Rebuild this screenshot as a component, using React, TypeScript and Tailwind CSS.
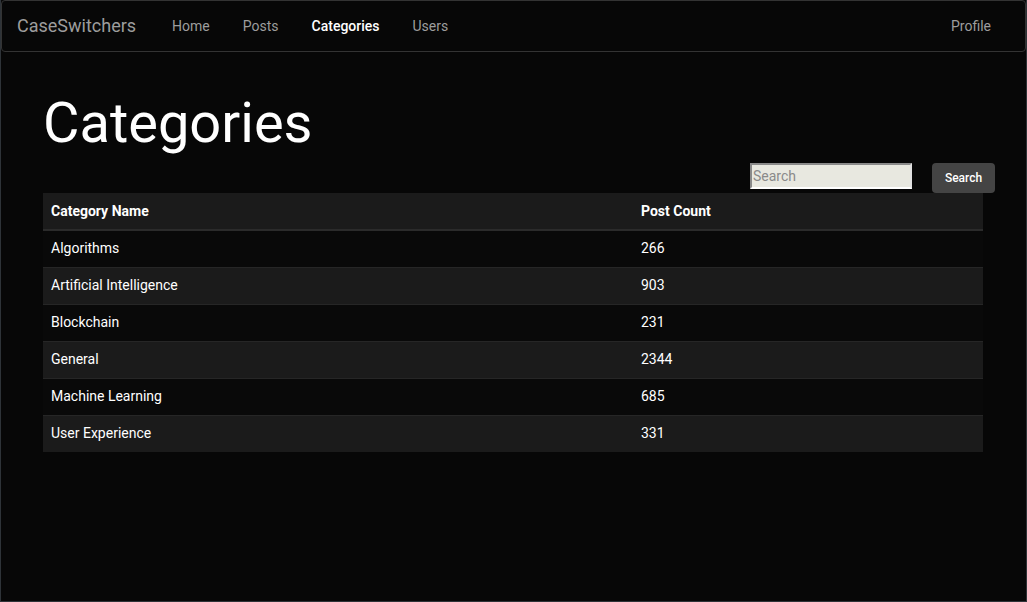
import React from "react";

const rows = [
  { name: "Algorithms", count: 266 },
  { name: "Artificial Intelligence", count: 903 },
  { name: "Blockchain", count: 231 },
  { name: "General", count: 2344 },
  { name: "Machine Learning", count: 685 },
  { name: "User Experience", count: 331 },
];

export default function App() {
  return (
    <div
      className="w-[1027px] h-[602px] bg-[#070707] border-x border-b border-[#2e3338] flex flex-col overflow-hidden"
      style={{ fontFamily: "Roboto, 'Liberation Sans', sans-serif" }}
    >
      <nav className="h-[52px] border border-[#333333] rounded-[4px] flex items-center pl-[15px] pr-[34px] pb-[1px] shrink-0">
        <span className="text-[18px] text-[#9d9d9d] leading-none">CaseSwitchers</span>
        <div className="flex items-center gap-[33px] ml-[36px] text-[14px] leading-none">
          <span className="text-[#9d9d9d]">Home</span>
          <span className="text-[#9d9d9d]">Posts</span>
          <span className="text-white font-medium">Categories</span>
          <span className="text-[#9d9d9d]">Users</span>
        </div>
        <span className="ml-auto text-[14px] text-[#9d9d9d] leading-none">Profile</span>
      </nav>

      <main className="pl-[42px] pr-[31px]">
        <h1 className="text-[56px] text-white leading-none mt-[43px] h-[66px]">Categories</h1>
        <div className="flex justify-end items-start h-[30px] mt-[2px]">
          <input
            placeholder="Search"
            className="w-[162px] h-[26px] bg-[#e8e8e0] border-2 border-t-[#8a8a8a] border-l-[#8a8a8a] border-r-[#e0e0e0] border-b-[#ffffff] text-[14px] px-[1px] placeholder:text-[#8a8a8a] outline-none"
          />
          <button className="ml-[20px] w-[63px] h-[30px] bg-[#444444] rounded-[4px] text-white text-[12px] font-medium">
            Search
          </button>
        </div>
        <table className="w-[940px] border-collapse text-[14px] text-white">
          <thead>
            <tr className="bg-[#1b1b1b] h-[37px] border-b-2 border-[#2b2b2b]">
              <th className="text-left font-bold pl-[8px] w-[590px]">Category Name</th>
              <th className="text-left font-bold pl-[8px]">Post Count</th>
            </tr>
          </thead>
          <tbody>
            {rows.map((r, i) => (
              <tr
                key={r.name}
                className={`h-[37px] border-t border-[#262626] ${i % 2 === 0 ? "bg-[#090909]" : "bg-[#1b1b1b]"}`}
              >
                <td className="pl-[8px]">{r.name}</td>
                <td className="pl-[8px]">{r.count}</td>
              </tr>
            ))}
          </tbody>
        </table>
      </main>
    </div>
  );
}
